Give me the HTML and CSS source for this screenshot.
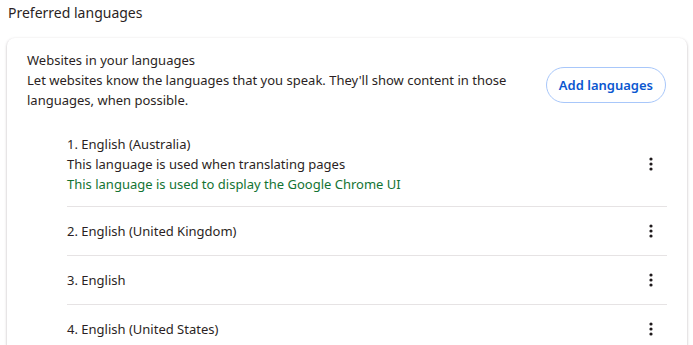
FILE: index.html
```html
<!DOCTYPE html>
<html lang="en">
<head>
  <meta charset="UTF-8" />
  <title>Preferred languages</title>
  <link rel="stylesheet" href="styles.css">
</head>
<body>

  <h2 class="section-title">Preferred languages</h2>

  <div class="card">
    <div class="intro">
      <div class="intro-text">
        <div>Websites in your languages</div>
        <div>Let websites know the languages that you speak. They'll show content in those languages, when possible.</div>
      </div>
      <button class="add-btn">Add languages</button>
    </div>

    <div class="lang-list">
      <div class="lang-row">
        <div class="lang-info">
          <div>1. English (Australia)</div>
          <div>This language is used when translating pages</div>
          <div class="ui-lang">This language is used to display the Google Chrome UI</div>
        </div>
        <button class="more-btn" aria-label="More actions">
          <svg width="4" height="14" viewBox="0 0 4 14"><circle cx="2" cy="2" r="1.6"/><circle cx="2" cy="7" r="1.6"/><circle cx="2" cy="12" r="1.6"/></svg>
        </button>
      </div>
      <div class="lang-row">
        <div class="lang-info">2. English (United Kingdom)</div>
        <button class="more-btn" aria-label="More actions">
          <svg width="4" height="14" viewBox="0 0 4 14"><circle cx="2" cy="2" r="1.6"/><circle cx="2" cy="7" r="1.6"/><circle cx="2" cy="12" r="1.6"/></svg>
        </button>
      </div>
      <div class="lang-row">
        <div class="lang-info">3. English</div>
        <button class="more-btn" aria-label="More actions">
          <svg width="4" height="14" viewBox="0 0 4 14"><circle cx="2" cy="2" r="1.6"/><circle cx="2" cy="7" r="1.6"/><circle cx="2" cy="12" r="1.6"/></svg>
        </button>
      </div>
      <div class="lang-row">
        <div class="lang-info">4. English (United States)</div>
        <button class="more-btn" aria-label="More actions">
          <svg width="4" height="14" viewBox="0 0 4 14"><circle cx="2" cy="2" r="1.6"/><circle cx="2" cy="7" r="1.6"/><circle cx="2" cy="12" r="1.6"/></svg>
        </button>
      </div>
    </div>
  </div>

</body>
</html>
```

FILE: styles.css
```css
body {
  margin: 0;
  background-color: #ffffff;
  font-family: "Noto Sans", sans-serif;
  font-size: 13px;
  line-height: 20px;
  color: #2b1f24;
}
.section-title {
  margin: 0;
  padding: 3px 8px 0;
  font-size: 14px;
  font-weight: normal;
  line-height: 20px;
}
.card {
  margin: 15px 6px 0 7px;
  padding: 12px 20px 0;
  background-color: #ffffff;
  border-radius: 8px;
  box-shadow: 0 1px 3px rgba(60, 40, 50, 0.25), 0 1px 2px rgba(60, 40, 50, 0.12);
}
.intro {
  display: flex;
  align-items: center;
  gap: 6px;
}
.intro-text {
  flex: 1;
}
.add-btn {
  height: 36px;
  padding: 0 12px;
  margin-right: 1px;
  background: #ffffff;
  border: 1px solid #a8c7fa;
  border-radius: 18px;
  color: #0b57d0;
  font-family: inherit;
  font-size: 13px;
  font-weight: 600;
  cursor: pointer;
  margin-top: 10px;
}
.lang-list {
  margin: 12px 0 0 40px;
}
.lang-row {
  display: flex;
  align-items: center;
  min-height: 48px;
  padding: 12px 0;
  border-top: 1px solid #e6e3e4;
}
.lang-row:first-child {
  border-top: none;
}
.lang-row + .lang-row {
  padding: 0;
}
.lang-info {
  flex: 1;
}
.ui-lang {
  color: #137333;
}
.more-btn {
  width: 36px;
  height: 36px;
  margin-right: -2px;
  display: flex;
  align-items: center;
  justify-content: center;
  background: none;
  border: none;
  cursor: pointer;
}
.more-btn svg {
  fill: #1f1a1c;
}
```
